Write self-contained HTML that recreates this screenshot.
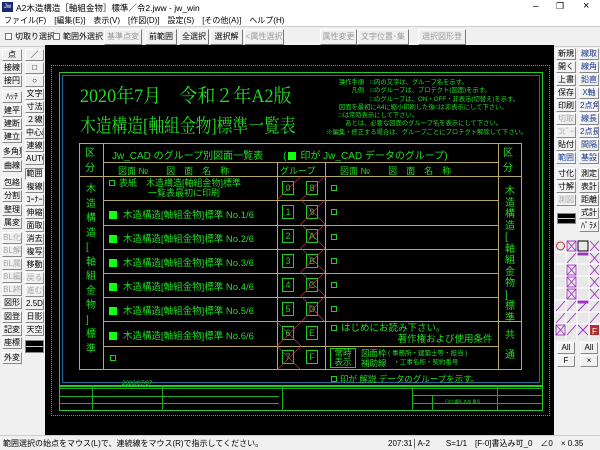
<!DOCTYPE html><html><head><meta charset="utf-8"><style>
*{margin:0;padding:0;box-sizing:border-box}
body{width:600px;height:450px;overflow:hidden;background:#f0f0f0;font-family:"Liberation Sans","Noto Sans CJK JP",sans-serif;position:relative;font-size:9px;color:#000}
.a{position:absolute}
.b{position:absolute;height:12px;border:1px solid;border-color:#fff #888 #888 #fff;background:#f0f0f0;font-size:8px;line-height:10px;text-align:center;white-space:nowrap;overflow:hidden}
.g{color:#666}
.tb{position:absolute;height:16px;top:29px;border:1px solid;border-color:#fff #777 #777 #fff;font-size:8px;line-height:14px;text-align:center}
.gr{color:#22dd22}
.row{position:absolute;left:103px;width:174px;font-size:9.5px;color:#22dd22;white-space:nowrap}
.sq{display:inline-block;width:8px;height:8px;background:#11ff11;margin-right:6px;vertical-align:-1px}
.gb{position:absolute;width:12px;height:14px;border:1px solid #22cc22;color:#22cc22;font-size:9px;text-align:center;line-height:12px}
.xb{position:absolute;width:6px;height:6px;border:1px solid #22cc22}
</style></head><body>
<div class="a" style="left:0;top:0;width:600px;height:15px;background:#fff"></div>
<div class="a" style="left:2px;top:2px;width:11px;height:10px;background:#1a2a70;color:#fff;font-size:6px;line-height:10px;text-align:center">Jw</div>
<div class="a" style="left:16px;top:2px;font-size:8.5px">A2木造構造［軸組金物］標準／令2.jww - jw_win</div>
<div class="a" style="left:533px;top:1px;font-size:10px">–</div>
<div class="a" style="left:556px;top:1px;font-size:9px">❐</div>
<div class="a" style="left:583px;top:0px;font-size:11px">×</div>
<div class="a" style="left:0;top:15px;width:600px;height:11px;background:#fff"></div>
<div class="a" style="left:4px;top:15px;font-size:8px;word-spacing:6px;white-space:nowrap">ファイル(F)　[編集(E)]　表示(V)　[作図(D)]　設定(S)　[その他(A)]　ヘルプ(H)</div>
<div class="a" style="left:0;top:26px;width:600px;height:1px;background:#ccc"></div>
<div class="a" style="left:5px;top:33px;width:7px;height:7px;border:1px solid #777;background:#fff"></div>
<div class="a" style="left:15px;top:31px;font-size:8px">切取り選択</div>
<div class="a" style="left:53px;top:33px;width:7px;height:7px;border:1px solid #777;background:#fff"></div>
<div class="a" style="left:63px;top:31px;font-size:8px">範囲外選択</div>
<div class="tb g" style="left:104px;width:38px;color:#999">基準点変更</div>
<div class="tb" style="left:145px;width:32px">前範囲</div>
<div class="tb" style="left:179px;width:30px">全選択</div>
<div class="tb" style="left:210px;width:33px">選択解除</div>
<div class="tb" style="left:244px;width:40px;color:#999">&lt;属性選択&gt;</div>
<div class="tb" style="left:320px;width:37px;color:#999">属性変更</div>
<div class="tb" style="left:357px;width:52px;color:#999">文字位置･集計</div>
<div class="tb" style="left:418px;width:48px;color:#999">選択図形登録</div>
<div class="a" style="left:0;top:46px;width:600px;height:1px;background:#ccc"></div>
<div class="a" style="left:45px;top:45px;width:509px;height:390px;background:#000"></div>
<div class="a" style="left:51px;top:65px;width:499px;height:351px;border:1px dotted #888"></div>
<div class="a" style="left:59px;top:72px;width:484px;height:315px;border:1px solid #22cc22"></div>
<div class="a" style="left:62px;top:75px;width:478px;height:308px;border:1px solid #1a6a9a"></div>
<div class="a" style="left:59px;top:385px;width:484px;height:26px;border:1px solid #22cc22"></div>
<div class="a" style="left:59px;top:388px;width:484px;border-top:1px solid #22aa22"></div>
<div class="a" style="left:59px;top:396px;width:220px;border-top:1px solid #22aa22"></div>
<div class="a" style="left:59px;top:403px;width:220px;border-top:1px solid #22aa22"></div>
<div class="a" style="left:92px;top:385px;width:1px;height:26px;background:#22aa22"></div>
<div class="a" style="left:162px;top:385px;width:1px;height:26px;background:#22aa22"></div>
<div class="a" style="left:282px;top:385px;width:1px;height:26px;background:#22aa22"></div>
<div class="a" style="left:497px;top:385px;width:1px;height:26px;background:#22aa22"></div>
<div class="a" style="left:412px;top:385px;width:1px;height:26px;background:#22aa22"></div>
<div class="a" style="left:412px;top:395px;width:130px;border-top:1px solid #22aa22"></div>
<div class="a" style="left:412px;top:403px;width:130px;border-top:1px solid #22aa22"></div>
<div class="a" style="left:432px;top:395px;width:1px;height:16px;background:#22aa22"></div>
<div class="a" style="left:122px;top:381px;font-size:6px;color:#22dd22;font-style:italic">2020/07/07</div>
<div class="a" style="left:445px;top:399px;font-size:4px;color:#22dd22">日付 場所 名前 番号</div>
<div class="a gr" style="left:80px;top:81px;font-size:19px;font-family:'Liberation Serif','Noto Serif CJK SC',serif;white-space:nowrap;transform:scaleX(0.95);transform-origin:0 0">2020年7月　令和２年A2版</div>
<div class="a gr" style="left:80px;top:111px;font-size:19px;font-family:'Liberation Serif','Noto Serif CJK SC',serif;white-space:nowrap;transform:scaleX(0.83);transform-origin:0 0">木造構造[軸組金物]標準一覧表</div>
<div class="a gr" style="left:320px;top:79px;font-size:6.3px;line-height:8.3px;white-space:nowrap">　　　操作手順　□内の文字は、グループ名を示す。<br>　　　　　凡例　□のグループは、プロテクト(図面)を示す。<br>　　　　　　　　□のグループは、ON・OFF・非表示(切替え)を示す。<br>　　　図面を最初にA4に縮小印刷した後□は非表示にして下さい。<br>　　　□は常時表示にして下さい。<br>　　　　あとは、必要な図面のグループ名を表示にして下さい。<br>　※編集・修正する場合は、グループごとにプロテクト解除して下さい。</div>
<div class="a" style="left:79px;top:143px;width:443px;height:227px;border:1px solid #b8a868"></div>
<div class="a" style="left:103px;top:143px;width:1px;height:227px;background:#b8a868"></div>
<div class="a" style="left:498px;top:143px;width:1px;height:227px;background:#b8a868"></div>
<div class="a" style="left:277px;top:162px;width:1px;height:208px;background:#b8a868"></div>
<div class="a" style="left:325px;top:162px;width:1px;height:208px;background:#b8a868"></div>
<div class="a" style="left:103px;top:162px;width:395px;height:1px;background:#b8a868"></div>
<div class="a" style="left:79px;top:176px;width:443px;height:1px;background:#b8a868"></div>
<div class="a" style="left:103px;top:200px;width:395px;height:1px;background:#b8a868"></div>
<div class="a" style="left:103px;top:225px;width:395px;height:1px;background:#b8a868"></div>
<div class="a" style="left:103px;top:249px;width:395px;height:1px;background:#b8a868"></div>
<div class="a" style="left:103px;top:273px;width:395px;height:1px;background:#b8a868"></div>
<div class="a" style="left:103px;top:297px;width:395px;height:1px;background:#b8a868"></div>
<div class="a" style="left:103px;top:321px;width:419px;height:1px;background:#b8a868"></div>
<div class="a" style="left:103px;top:346px;width:395px;height:1px;background:#b8a868"></div>
<div class="a gr" style="left:85px;top:146px;font-size:10px;line-height:15px">区<br>分</div>
<div class="a gr" style="left:503px;top:146px;font-size:10px;line-height:15px">区<br>分</div>
<div class="a gr" style="left:112px;top:147px;font-size:10px;white-space:nowrap">Jw_CAD のグループ別図面一覧表　　(<span class="sq" style="margin:0 4px 0 2px"></span>印が Jw_CAD データのグループ)</div>
<div class="a gr" style="left:118px;top:164px;font-size:9px;white-space:nowrap">図面 №　　図　面　名　称</div>
<div class="a gr" style="left:280px;top:164px;font-size:9px">グループ</div>
<div class="a gr" style="left:340px;top:164px;font-size:9px;white-space:nowrap">図面 №　　図　面　名　称</div>
<div class="a gr" style="left:86px;top:183px;font-size:10px;line-height:14.5px;width:10px">木<br>造<br>構<br>造<br>[<br>軸<br>組<br>金<br>物<br>]<br>標<br>準</div>
<div class="a gr" style="left:505px;top:186px;font-size:10px;line-height:11.5px;width:10px">木<br>造<br>構<br>造<br>[<br>軸<br>組<br>金<br>物<br>]<br>標<br>準</div>
<div class="a gr" style="left:505px;top:326px;font-size:10px;line-height:20px">共<br>通</div>
<div class="row" style="top:178px;line-height:10px;font-size:9px"><span class="xb" style="position:relative;display:inline-block;margin:0 4px 0 6px"></span>表紙　木造構造[軸組金物]標準<br>　　　　　一覧表最初に印刷</div>
<div class="row" style="top:207px;padding-left:6px"><span class="sq"></span>木造構造[軸組金物]標準 No.1/6</div>
<div class="row" style="top:231px;padding-left:6px"><span class="sq"></span>木造構造[軸組金物]標準 No.2/6</div>
<div class="row" style="top:255px;padding-left:6px"><span class="sq"></span>木造構造[軸組金物]標準 No.3/6</div>
<div class="row" style="top:279px;padding-left:6px"><span class="sq"></span>木造構造[軸組金物]標準 No.4/6</div>
<div class="row" style="top:303px;padding-left:6px"><span class="sq"></span>木造構造[軸組金物]標準 No.5/6</div>
<div class="row" style="top:328px;padding-left:6px"><span class="sq"></span>木造構造[軸組金物]標準 No.6/6</div>
<div class="xb" style="left:110px;top:355px"></div>
<div class="gb" style="left:282px;top:181px">0</div><div class="gb" style="left:306px;top:181px">8</div>
<div class="gb" style="left:282px;top:205px">1</div><div class="gb" style="left:306px;top:205px">9</div>
<div class="gb" style="left:282px;top:229px">2</div><div class="gb" style="left:306px;top:229px">A</div>
<div class="gb" style="left:282px;top:254px">3</div><div class="gb" style="left:306px;top:254px">B</div>
<div class="gb" style="left:282px;top:278px">4</div><div class="gb" style="left:306px;top:278px">C</div>
<div class="gb" style="left:282px;top:302px">5</div><div class="gb" style="left:306px;top:302px">D</div>
<div class="gb" style="left:282px;top:326px">6</div><div class="gb" style="left:306px;top:326px">E</div>
<div class="gb" style="left:282px;top:350px">7</div><div class="gb" style="left:306px;top:350px">F</div>
<svg class="a" style="left:277px;top:176px" width="48" height="194"><g stroke="#c04050" stroke-width="0.6" fill="none"><path d="M0 24L24 0M24 24L48 0M24 24L48 48M24 48L48 24M24 48L48 72M24 72L48 48M24 72L48 96M24 96L48 72M24 96L48 120M24 120L48 96M24 120L48 146M24 146L48 120M0 170L24 146M0 146L24 170M0 194L24 170M0 170L24 194"/></g></svg>
<div class="xb" style="left:331px;top:185px"></div><div class="xb" style="left:331px;top:209px"></div><div class="xb" style="left:331px;top:234px"></div><div class="xb" style="left:331px;top:258px"></div><div class="xb" style="left:331px;top:282px"></div><div class="xb" style="left:331px;top:306px"></div>
<div class="a gr" style="left:331px;top:323px;font-size:9.5px;line-height:11px;white-space:nowrap"><span class="xb" style="position:relative;display:inline-block;margin-right:4px"></span>はじめにお読み下さい。<br>　　　　　　　著作権および使用条件</div>
<div class="a gr" style="left:330px;top:348px;width:26px;height:20px;border:1px solid #22cc22;font-size:8.5px;line-height:9px;text-align:center">常時<br>表示</div>
<div class="a gr" style="left:361px;top:348px;font-size:8.5px;line-height:10px;white-space:nowrap">図面枠<br>補助線</div>
<div class="a gr" style="left:388px;top:349px;font-size:6.5px;line-height:9px;white-space:nowrap">(&nbsp;事務所・建築士等・担当&nbsp;)<br>&nbsp;&nbsp;&nbsp;・工事名称・契約番号</div>
<div class="a gr" style="left:331px;top:373px;font-size:8.5px;white-space:nowrap"><span class="xb" style="position:relative;display:inline-block;margin-right:3px"></span>印が 解説 データのグループを示す。</div>
<div class="b" style="left:2px;top:49px;width:20px">点</div>
<div class="b" style="left:2px;top:62px;width:20px">接線</div>
<div class="b" style="left:2px;top:75px;width:20px">接円</div>
<div class="b" style="left:2px;top:91px;width:20px">ﾊｯﾁ</div>
<div class="b" style="left:2px;top:105px;width:20px">建平</div>
<div class="b" style="left:2px;top:118px;width:20px">建断</div>
<div class="b" style="left:2px;top:131px;width:20px">建立</div>
<div class="b" style="left:2px;top:146px;width:20px">多角形</div>
<div class="b" style="left:2px;top:160px;width:20px">曲線</div>
<div class="b" style="left:2px;top:177px;width:20px">包絡</div>
<div class="b" style="left:2px;top:190px;width:20px">分割</div>
<div class="b" style="left:2px;top:204px;width:20px">整理</div>
<div class="b" style="left:2px;top:217px;width:20px">属変</div>
<div class="b g" style="left:2px;top:232px;width:20px;color:#aaa">BL化</div>
<div class="b g" style="left:2px;top:245px;width:20px;color:#aaa">BL解</div>
<div class="b g" style="left:2px;top:258px;width:20px;color:#aaa">BL属</div>
<div class="b g" style="left:2px;top:271px;width:20px;color:#aaa">BL編</div>
<div class="b g" style="left:2px;top:284px;width:20px;color:#aaa">BL終</div>
<div class="b" style="left:2px;top:297px;width:20px">図形</div>
<div class="b" style="left:2px;top:311px;width:20px">図登</div>
<div class="b" style="left:2px;top:324px;width:20px">記変</div>
<div class="b" style="left:2px;top:337px;width:20px">座標</div>
<div class="b" style="left:2px;top:352px;width:20px">外変</div>
<div class="b" style="left:25px;top:49px;width:19px">／</div>
<div class="b" style="left:25px;top:62px;width:19px">□</div>
<div class="b" style="left:25px;top:75px;width:19px">○</div>
<div class="b" style="left:25px;top:88px;width:19px">文字</div>
<div class="b" style="left:25px;top:101px;width:19px">寸法</div>
<div class="b" style="left:25px;top:114px;width:19px">２線</div>
<div class="b" style="left:25px;top:127px;width:19px">中心線</div>
<div class="b" style="left:25px;top:140px;width:19px">連線</div>
<div class="b" style="left:25px;top:153px;width:19px">AUTO</div>
<div class="b" style="left:25px;top:168px;width:19px;border-color:#888 #fff #fff #888">範囲</div>
<div class="b" style="left:25px;top:181px;width:19px">複線</div>
<div class="b" style="left:25px;top:194px;width:19px">ｺｰﾅｰ</div>
<div class="b" style="left:25px;top:207px;width:19px">伸縮</div>
<div class="b" style="left:25px;top:220px;width:19px">面取</div>
<div class="b" style="left:25px;top:233px;width:19px">消去</div>
<div class="b" style="left:25px;top:246px;width:19px">複写</div>
<div class="b" style="left:25px;top:259px;width:19px">移動</div>
<div class="b" style="left:25px;top:272px;width:19px;color:#aaa">戻る</div>
<div class="b" style="left:25px;top:285px;width:19px;color:#aaa">進む</div>
<div class="b" style="left:25px;top:298px;width:19px">2.5D</div>
<div class="b" style="left:25px;top:311px;width:19px">日影</div>
<div class="b" style="left:25px;top:324px;width:19px">天空</div>
<div class="a" style="left:25px;top:340px;width:19px;height:13px;background:#000;border:1px solid #888"></div>
<div class="a" style="left:26px;top:346px;width:17px;height:1px;background:#ccc"></div>
<div class="b" style="left:556px;top:48px;width:20px">新規</div>
<div class="b" style="left:556px;top:61px;width:20px">開く</div>
<div class="b" style="left:556px;top:74px;width:20px">上書</div>
<div class="b" style="left:556px;top:87px;width:20px">保存</div>
<div class="b" style="left:556px;top:100px;width:20px">印刷</div>
<div class="b" style="left:556px;top:113px;width:20px;color:#aaa">切取</div>
<div class="b" style="left:556px;top:126px;width:20px;color:#aaa">ｺﾋﾟｰ</div>
<div class="b" style="left:556px;top:139px;width:20px">貼付</div>
<div class="b" style="left:556px;top:152px;width:20px;color:#1a4a9a">範囲</div>
<div class="b" style="left:556px;top:168px;width:20px">寸化</div>
<div class="b" style="left:556px;top:181px;width:20px">寸解</div>
<div class="b" style="left:556px;top:194px;width:20px;color:#aaa">測図</div>
<div class="a" style="left:557px;top:213px;width:19px;height:11px;background:#000;border:1px solid #888"></div>
<div class="a" style="left:558px;top:218px;width:17px;height:1px;background:#ccc"></div>
<div class="b" style="left:579px;top:48px;width:20px;color:#1a3a8a">線取</div>
<div class="b" style="left:579px;top:61px;width:20px;color:#1a3a8a">線角</div>
<div class="b" style="left:579px;top:74px;width:20px;color:#1a3a8a">鉛直</div>
<div class="b" style="left:579px;top:87px;width:20px;color:#1a3a8a">X軸</div>
<div class="b" style="left:579px;top:100px;width:20px;color:#1a3a8a">2点角</div>
<div class="b" style="left:579px;top:113px;width:20px;color:#1a3a8a">線長</div>
<div class="b" style="left:579px;top:126px;width:20px;color:#1a3a8a">2点長</div>
<div class="b" style="left:579px;top:139px;width:20px;color:#1a3a8a">間隔</div>
<div class="b" style="left:579px;top:152px;width:20px;color:#1a3a8a">基設</div>
<div class="b" style="left:579px;top:168px;width:20px">測定</div>
<div class="b" style="left:579px;top:181px;width:20px">表計</div>
<div class="b" style="left:579px;top:194px;width:20px">距離</div>
<div class="b" style="left:579px;top:207px;width:20px">式計</div>
<div class="b" style="left:579px;top:220px;width:20px">ﾊﾟﾗﾒ</div>
<svg class="a" style="left:555px;top:240px" width="45" height="100">
<rect x="0" y="0" width="45" height="100" fill="#e8e8e8"/>
<g stroke="#fff" stroke-width="1"><path d="M0 12H45M0 24H45M0 36H45M0 48H45M0 60H45M0 72H45M0 84H45M11 0V100M22 0V100M34 0V100"/></g>
<g stroke="#a030c0" stroke-width="0.9" fill="none">
<path d="M12 1L21 11M21 1L12 11M35 1L44 11M44 1L35 11M12 23L21 13M35 13L44 23M44 13L35 23M12 25L21 35M21 25L12 35M35 25L44 35M44 25L35 35M12 37L21 47M21 37L12 47M35 37L44 47M44 37L35 47M12 49L21 59M21 49L12 59M35 49L44 59M44 49L35 59M1 71L10 61M12 71L21 61M23 71L33 61M35 71L44 61M1 83L10 73M12 83L21 73M35 83L44 73M1 85L10 95M10 85L1 95M12 95L21 85M23 85L33 95M33 85L23 95"/>
<rect x="12" y="1" width="9" height="10"/><rect x="12" y="25" width="9" height="10"/><rect x="12" y="37" width="9" height="10"/><rect x="12" y="49" width="9" height="10"/><rect x="1" y="85" width="9" height="10"/>
<rect x="23" y="61" width="10" height="2" fill="#a030c0"/><rect x="23" y="13" width="10" height="2" fill="#a030c0"/>
</g>
<circle cx="5.5" cy="6" r="4" fill="none" stroke="#c03030"/><rect x="23" y="1" width="10" height="10" fill="none" stroke="#000"/>
<rect x="35" y="85" width="9" height="10" fill="#b03030"/><text x="37" y="94" font-size="8" fill="#fff" font-family="Liberation Sans">F</text>
</svg>
<div class="b" style="left:557px;top:342px;width:18px">All</div>
<div class="b" style="left:580px;top:342px;width:18px">All</div>
<div class="b" style="left:557px;top:355px;width:18px">F</div>
<div class="b" style="left:580px;top:355px;width:18px">×</div>
<div class="a" style="left:0;top:435px;width:600px;height:15px;background:#f0f0f0;border-top:1px solid #ccc"></div>
<div class="a" style="left:3px;top:438px;font-size:8px;white-space:nowrap">範囲選択の始点をマウス(L)で、連続線をマウス(R)で指示してください。</div>
<div class="a" style="left:388px;top:438px;font-size:8px;white-space:nowrap">207:31│A-2　　S=1/1　[F-0]書込み可_0　∠0　× 0.35</div>
</body></html>
